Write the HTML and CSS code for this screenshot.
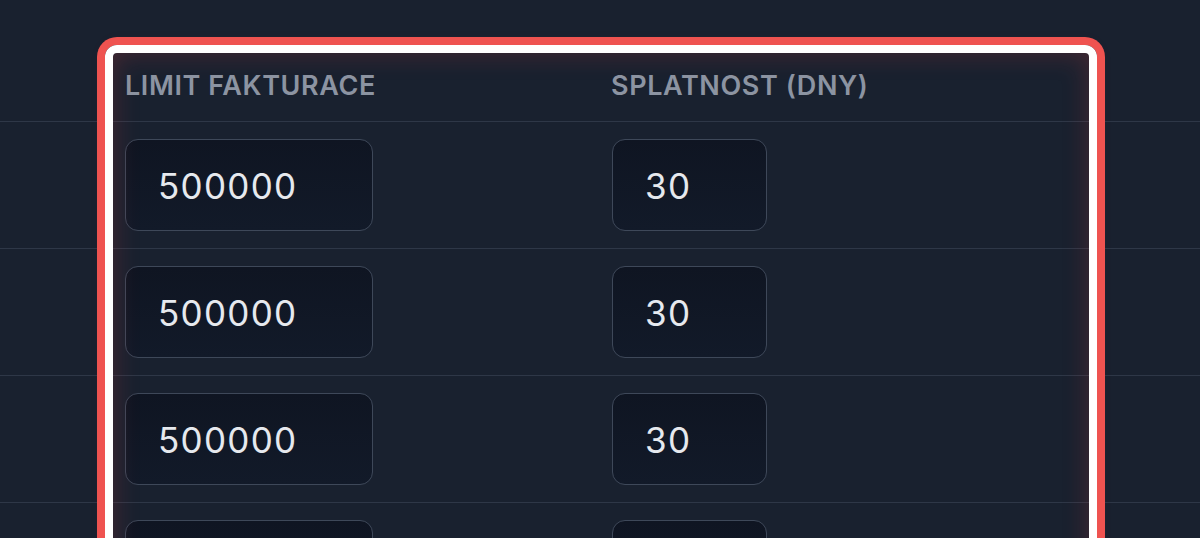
FILE: index.html
```html
<!DOCTYPE html>
<html lang="cs">
<head>
<meta charset="utf-8">
<title>Limity</title>
<link rel="stylesheet" href="styles.css">
</head>
<body>
<div class="page">
  <div class="table">
    <div class="row head">
      <div class="cell c1">LIMIT FAKTURACE</div>
      <div class="cell c2">SPLATNOST (DNY)</div>
    </div>
    <div class="row">
      <div class="cell c1"><div class="input wide">500000</div></div>
      <div class="cell c2"><div class="input narrow">30</div></div>
    </div>
    <div class="row">
      <div class="cell c1"><div class="input wide">500000</div></div>
      <div class="cell c2"><div class="input narrow">30</div></div>
    </div>
    <div class="row">
      <div class="cell c1"><div class="input wide">500000</div></div>
      <div class="cell c2"><div class="input narrow">30</div></div>
    </div>
    <div class="row">
      <div class="cell c1"><div class="input wide">500000</div></div>
      <div class="cell c2"><div class="input narrow">30</div></div>
    </div>
  </div>
  <div class="highlight"></div>
</div>
</body>
</html>
```
FILE: styles.css
```css
html, body {
  margin: 0;
  padding: 0;
  background: #19212f;
  overflow: hidden;
}
.page {
  position: relative;
  width: 1200px;
  height: 538px;
  overflow: hidden;
  font-family: Inter, "Noto Sans", sans-serif;
}
.table {
  display: flex;
  flex-direction: column;
}
.row {
  display: flex;
  padding: 17px 0 17px 125px;
  border-bottom: 1px solid #2e3747;
}
.row.head {
  height: 122px;
  box-sizing: border-box;
  padding: 69px 0 0 125px;
}
.cell.c1 {
  width: 486px;
}
.cell.c2 {
  width: 400px;
}
.head .cell {
  font-size: 27px;
  font-weight: 600;
  color: #8c94a2;
  letter-spacing: 0.6px;
  line-height: normal;
}
.input {
  box-sizing: border-box;
  height: 92px;
  border: 1.5px solid #3e4859;
  border-radius: 13px;
  background: linear-gradient(180deg, #0f1522 0%, #121a29 100%);
  color: #e6e9ee;
  font-size: 35px;
  font-weight: 400;
  letter-spacing: 1.3px;
  display: flex;
  align-items: center;
  padding-left: 32px;
  padding-top: 2px;
}
.input.wide {
  width: 248px;
}
.input.narrow {
  width: 155px;
  margin-left: 1px;
}
.highlight {
  position: absolute;
  left: 105px;
  top: 45px;
  width: 992px;
  height: 600px;
  box-sizing: border-box;
  border: 8px solid #ffffff;
  border-radius: 12px;
  box-shadow: 0 0 0 8px #ef5350, inset 0 0 26px rgba(200, 60, 60, 0.28), 0 0 18px rgba(239, 83, 80, 0.08);
  pointer-events: none;
}
```
